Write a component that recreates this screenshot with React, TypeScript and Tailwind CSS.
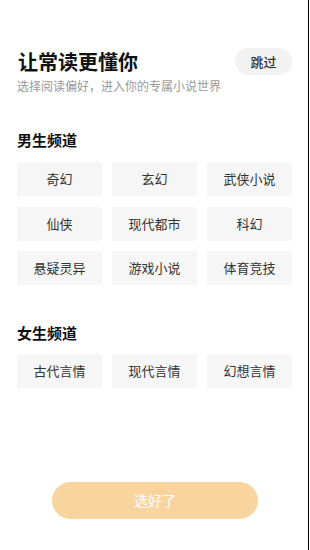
import React from "react";

const male = ["奇幻", "玄幻", "武侠小说", "仙侠", "现代都市", "科幻", "悬疑灵异", "游戏小说", "体育竞技"];
const female = ["古代言情", "现代言情", "幻想言情"];

function Card({ label }: { label: string }) {
  return (
    <div className="h-[34px] bg-[#f6f6f6] rounded-[2px] flex items-center justify-center text-[13px] text-[#333333]">
      {label}
    </div>
  );
}

export default function App() {
  return (
    <div
      className="relative w-[310px] h-[550px] bg-white flex flex-col overflow-hidden"
      style={{ fontFamily: '"Noto Sans CJK SC", "Noto Sans", sans-serif' }}
    >
      <div className="absolute top-0 right-[1px] w-[1px] h-full bg-black" />
      <div className="pl-[17px] pr-[18px] flex flex-col">
        <div className="mt-[48px] h-[27px] flex items-center justify-between">
          <div className="text-[20px] font-bold leading-[27px] text-[#111111] ml-[1px]">让常读更懂你</div>
          <div className="w-[57px] h-[27px] rounded-full bg-[#f2f2f2] flex items-center justify-center text-[13px] font-medium text-[#333333]">
            跳过
          </div>
        </div>
        <div className="mt-[3px] text-[12px] leading-[16px] text-[#999999]">选择阅读偏好，进入你的专属小说世界</div>

        <div className="mt-[36px] text-[15px] font-bold leading-[20px] text-[#111111]">男生频道</div>
        <div className="mt-[12px] grid grid-cols-3 gap-x-[10px] gap-y-[10.5px]">
          {male.map((m) => (
            <Card key={m} label={m} />
          ))}
        </div>

        <div className="mt-[38px] text-[15px] font-bold leading-[20px] text-[#111111]">女生频道</div>
        <div className="mt-[11px] grid grid-cols-3 gap-x-[10px]">
          {female.map((m) => (
            <Card key={m} label={m} />
          ))}
        </div>
      </div>

      <div className="mt-auto mb-[31px] flex justify-center">
        <div className="w-[206px] h-[37px] rounded-full bg-[#f8d49e] flex items-center justify-center text-[14px] text-white">
          选好了
        </div>
      </div>
    </div>
  );
}
